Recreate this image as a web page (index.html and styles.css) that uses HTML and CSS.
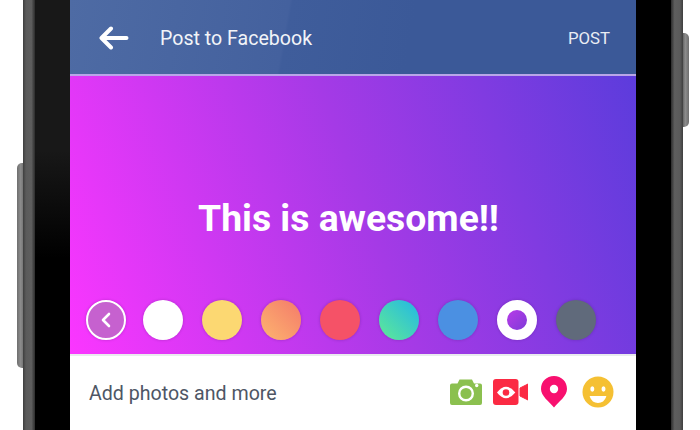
FILE: index.html
```html
<!DOCTYPE html>
<html lang="en">
<head>
    <meta charset="UTF-8">
    <title>Post to Facebook</title>
    <link rel="stylesheet" href="styles.css">
</head>
<body>
    <div class="device">
        <div class="key key-left"></div>
        <div class="phone">
            <div class="screen">
                <div class="top-bar">
                    <svg class="back" width="30" height="24" viewBox="0 0 30 24">
                        <path d="M12 2.500 L2.500 12 L12 21.500 M3 12 H27.500" fill="none" stroke="#fff" stroke-width="4" stroke-linecap="round" stroke-linejoin="round"/>
                    </svg>
                    <span class="title">Post to Facebook</span>
                    <span class="post">POST</span>
                </div>
                <div class="canvas">
                    <div class="message">This is awesome!!</div>
                    <div class="swatches">
                        <div class="swatch swatch-back">
                            <svg width="14" height="18" viewBox="0 0 14 18">
                                <path d="M10 3 L4 9 L10 15" fill="none" stroke="#fff" stroke-width="2.600" stroke-linecap="round" stroke-linejoin="round"/>
                            </svg>
                        </div>
                        <div class="swatch white"></div>
                        <div class="swatch yellow"></div>
                        <div class="swatch orange"></div>
                        <div class="swatch red"></div>
                        <div class="swatch teal"></div>
                        <div class="swatch blue"></div>
                        <div class="swatch selected"></div>
                        <div class="swatch grey"></div>
                    </div>
                </div>
                <div class="footer">
                    <span class="add">Add photos and more</span>
                    <div class="icons">
                        <svg class="icon-camera" width="32" height="26" viewBox="0 0 32 26">
                            <path d="M2 4.500 H7.500 L9.500 0.500 H22 L24 4.500 H30 Q32 4.500 32 6.500 V24 Q32 26 30 26 H2 Q0 26 0 24 V6.500 Q0 4.500 2 4.500 Z" fill="#8bc04f"/>
                            <circle cx="16" cy="14.500" r="6.800" fill="none" stroke="#fff" stroke-width="2.400"/>
                            <circle cx="26.700" cy="6.500" r="1.700" fill="#fff"/>
                        </svg>
                        <svg class="icon-video" width="35" height="26" viewBox="0 0 35 26">
                            <rect x="0" y="0" width="25.500" height="26" rx="3" fill="#fb2a43"/>
                            <path d="M35 5 V21 L27 17 V9 Z" fill="#fb2a43" stroke="#fb2a43" stroke-width="1" stroke-linejoin="round"/>
                            <path d="M4 13.500 Q13 2 22.300 13.500 Q13 25 4 13.500 Z" fill="#fff"/>
                            <circle cx="13" cy="13.500" r="3.300" fill="#fb2a43"/>
                        </svg>
                        <svg class="icon-pin" width="26" height="32" viewBox="0 0 26 32">
                            <path d="M13 0 C20.500 0 26 5.500 26 13 C26 20 18 25.500 13 31.500 C8 25.500 0 20 0 13 C0 5.500 5.500 0 13 0 Z" fill="#f8106f"/>
                            <circle cx="13" cy="13" r="4.200" fill="#fff"/>
                        </svg>
                        <svg class="icon-smile" width="32" height="32" viewBox="0 0 32 32">
                            <circle cx="16" cy="16" r="15.500" fill="#f5c033"/>
                            <ellipse cx="10.300" cy="13" rx="2" ry="2.700" fill="#fff"/>
                            <ellipse cx="21.500" cy="13" rx="2" ry="2.700" fill="#fff"/>
                            <path d="M8 20 H24 Q24.500 20 24.200 20.800 Q22 27 16 27 Q10 27 7.800 20.800 Q7.500 20 8 20 Z" fill="#fff"/>
                        </svg>
                    </div>
                </div>
            </div>
        </div>
        <div class="key key-right"></div>
    </div>
</body>
</html>
```

FILE: styles.css
```css
html, body { margin: 0; height: 100%; background: #fff; overflow: hidden; }
body { font-family: Roboto, "Liberation Sans", sans-serif; }
.device { display: flex; height: 430px; padding-left: 17px; }
.key { width: 6px; flex: none; background: linear-gradient(to right, #6e6e6e, #8c8c8c 60%, #777); }
.key-left { height: 205px; margin-top: 163px; border-radius: 5px 0 0 5px; }
.key-right { height: 94px; margin-top: 33px; border-radius: 0 5px 5px 0; background: linear-gradient(to left, #6e6e6e, #8c8c8c 60%, #666); }
.phone {
    flex: none; width: 566px; padding: 0 47px;
    background:
        linear-gradient(to right, #3e3e3e, #5a5a5a 25%, #5e5e5e 70%, #2c2c2c) left / 12px 100% no-repeat,
        linear-gradient(to left, #3e3e3e, #5a5a5a 25%, #5e5e5e 70%, #2c2c2c) right / 12px 100% no-repeat,
        linear-gradient(to bottom, #181818 35%, #000 60%) 12px 0 / 35px 100% no-repeat,
        #000;
}
.screen { width: 566px; height: 430px; display: flex; flex-direction: column; background: #fff; }
.top-bar { height: 74px; flex: none; display: flex; align-items: center; padding: 2px 26px 0 29px; box-sizing: border-box; color: #fff; background: linear-gradient(100deg, #4e6ba4, #44619e 38%, #3f5d9b 38.500%, #3b5998 60%); }
.back { margin-right: 31px; }
.title { font-size: 19.600px; flex: 1; color: #f2f4f8; }
.post { font-size: 16.800px; color: #e9edf4; }
.canvas { height: 280px; flex: none; display: flex; flex-direction: column; border-top: 2px solid #b9a6e8; box-sizing: border-box; background: linear-gradient(70deg, #fb36ff, #a53ae6 52%, #5c3cdc); }
.message { flex: 1; display: flex; align-items: center; justify-content: center; padding: 60px 9px 0 0; color: #fff; font-size: 37.300px; font-weight: 700; }
.swatches { display: flex; gap: 19px; padding: 0 0 14px 16px; }
.swatch { width: 40px; height: 40px; flex: none; border-radius: 50%; box-shadow: 0 0 3px rgba(60, 20, 90, 0.3); box-sizing: border-box; display: flex; align-items: center; justify-content: center; }
.swatch-back { background: #c661cf; border: 2px solid #fff; margin-right: -2px; }
.white { background: #fff; }
.yellow { background: #fcd872; }
.orange { background: linear-gradient(45deg, #fdb56f, #f47a6a); }
.red { background: #f55267; }
.teal { background: linear-gradient(45deg, #60ea95, #22b7e6); }
.blue { background: #4b90e2; }
.selected { border: 10px solid #fff; background: linear-gradient(135deg, #b83ce8, #7e3ad8); }
.grey { background: #606a7b; }
.footer { flex: 1; display: flex; align-items: center; justify-content: space-between; padding: 0 22px 0 19px; border-top: 2px solid #e9ebee; }
.add { font-size: 19.600px; color: #4e5665; }
.icons { display: flex; align-items: center; padding-bottom: 2px; }
.icon-video { margin: 0 13px 0 11px; }
.icon-smile { margin-left: 15px; }
```
